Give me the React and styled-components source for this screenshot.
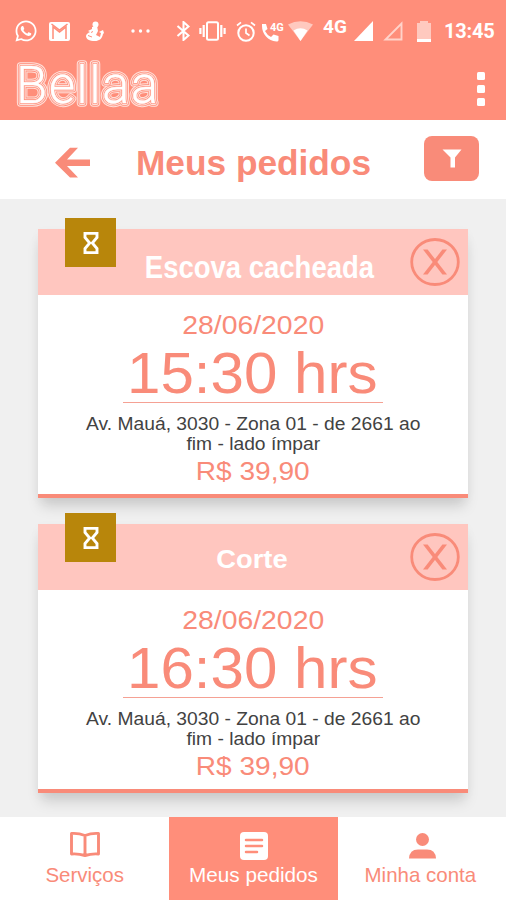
import React from "react";
import styled, { createGlobalStyle } from "styled-components";
import { FaWhatsapp } from "react-icons/fa";

const CORAL = "#ff8e7a";
const INK = "#f98b79";

const Global = createGlobalStyle`
  * { box-sizing: border-box; }
  body { margin: 0; background: #f0f0f0; font-family: "Liberation Sans", Arial, sans-serif; }
  svg { display: block; flex: none; }
`;
const Screen = styled.div`
  width: 506px; height: 900px; display: flex; flex-direction: column; background: #f0f0f0; overflow: hidden;
`;
const TopBar = styled.header`
  flex: none; height: 120px; background: ${CORAL}; color: #fff;
`;
const StatusBar = styled.div`
  height: 60px; padding: 19px 0 0 14px; display: flex; align-items: flex-start;
`;
const Slot = styled.span`
  flex: none; display: flex; width: ${(p) => p.$w}px; height: 24px; align-items: center;
`;
const Network = styled.span`
  width: 31px; margin-top: -2px; font: 700 19px/19px Roboto, sans-serif;
`;
const Clock = styled.span`
  font: 700 20px/25px Roboto, sans-serif; letter-spacing: -0.2px;
`;
const BrandRow = styled.div`
  height: 59px; padding: 0 19px 0 17px; display: flex; justify-content: space-between;
`;
const Logo = styled.svg`
  font: 300 51px Roboto, "Liberation Sans", sans-serif; overflow: visible;
  text { stroke-linejoin: round; }
`;
const Menu = styled.div`
  display: flex; flex-direction: column; gap: 5px; padding: 12px 2px 0 0;
`;
const MenuDot = styled.i`
  width: 8px; height: 8px; border-radius: 1.5px; background: #fff;
`;
const TitleBar = styled.div`
  flex: none; height: 79px; background: #fff; display: grid; grid-template-columns: 136px 1fr 82px; color: ${INK};
`;
const BackButton = styled.button`
  border: 0; background: none; padding: 26.5px 0 0 55px; display: flex; align-items: flex-start; color: inherit;
`;
const Text = styled.div`
  white-space: pre-line; transform: scaleX(${(p) => p.$sx || 1}); transform-origin: ${(p) => p.$origin || "center"};
`;
const Title = styled(Text)`
  font-size: 35px; font-weight: 700; line-height: 40px; padding-top: 22.5px; margin-left: -0.5px; white-space: nowrap;
`;
const FilterButton = styled.button`
  width: 55px; height: 45px; margin-top: 16px; padding: 0; border: 0; border-radius: 8px; background: ${INK};
  display: grid; place-items: center;
`;
const List = styled.main`
  flex: 1; padding: 30px 38px 0 37.5px; display: flex; flex-direction: column; gap: 26px;
`;
const Card = styled.article`
  flex: none; height: 269px; background: #fff; border-bottom: 4px solid ${INK};
  box-shadow: 0 11px 13px -3px rgba(0, 0, 0, 0.15), 0 3px 10px rgba(0, 0, 0, 0.03);
`;
const CardHead = styled.div`
  position: relative; height: 66px; background: #ffc6bf; display: flex; justify-content: center; color: #fff;
`;
const Badge = styled.span`
  position: absolute; left: 27.9px; top: -11px; width: 50.5px; height: 49px; background: #b8860b; display: grid; place-items: center;
`;
const Service = styled(Text)`
  font-size: ${(p) => p.$size}px; line-height: 36px; font-weight: 700; margin-top: ${(p) => p.$top}px; margin-left: ${(p) => p.$dx}px; white-space: nowrap;
`;
const Cancel = styled.button`
  position: absolute; right: 8.5px; top: 8px; border: 0; padding: 0; background: none;
`;
const CardBody = styled.div`
  padding-top: 15px; text-align: center; color: ${INK};
`;
const DateText = styled(Text)`font-size: 26px; line-height: 30px;`;
const Time = styled(Text)`font-size: 57.5px; line-height: 64px; padding-top: 1px; margin-left: -2px;`;
const Rule = styled.div`width: 260px; height: 1px; margin: -3px auto 0; background: #f5a194;`;
const Address = styled(Text)`font-size: 17.5px; line-height: 20px; padding-top: 11px; color: #424242;`;
const Price = styled(Text)`font-size: 26px; line-height: 30px; padding-top: 2px; margin-left: -1px;`;
const Nav = styled.nav`
  flex: none; height: 83px; background: #fff; display: grid; grid-template-columns: 169px 169px 1fr;
`;
const Tab = styled.a`
  display: flex; flex-direction: column; align-items: center; padding-top: 13px; gap: 2px;
  background: ${(p) => (p.$active ? CORAL : "#fff")}; color: ${(p) => (p.$active ? "#fff" : INK)};
`;
const TabLabel = styled(Text)`
  font-size: 20.7px; line-height: 24px; white-space: nowrap; margin-left: ${(p) => p.$dx || 0}px;
`;

const services = [
  { name: "Escova cacheada", size: 32, sx: 0.859, top: 20, dx: 14, time: "15:30 hrs" },
  { name: "Corte", size: 26, sx: 1.05, top: 17, dx: -1, time: "16:30 hrs" },
];

const Bellaa = () => (
  <Logo width="144" height="50" viewBox="0 0 144 50">
    {[[7.4, "#ffe0da"], [5.4, CORAL], [3.8, "#ffe0da"], [1.9, CORAL]].map(([w, c]) => (
      <text key={w} x="-1" y="42.5" textLength="142" stroke={c} strokeWidth={w} fill={c}>Bellaa</text>
    ))}
    <text x="-1" y="42.5" textLength="142" fill="#fff" stroke="#fff" strokeWidth="0.4">Bellaa</text>
  </Logo>
);

function Order({ order }) {
  return (
    <Card>
      <CardHead>
        <Badge>
          <svg width="18" height="24" viewBox="0 0 18 24" fill="none" stroke="#fff" strokeWidth="2.9">
            <path d="M3 2.4h12v4.1L10.300 12l4.700 5.500v4.100H3v-4.100L7.700 12 3 6.500z" />
          </svg>
        </Badge>
        <Service $size={order.size} $sx={order.sx} $top={order.top} $dx={order.dx}>{order.name}</Service>
        <Cancel aria-label="Cancelar">
          <svg width="50" height="50" viewBox="0 0 50 50" fill="none" stroke={INK}>
            <ellipse cx="25" cy="25" rx="23.3" ry="22.5" strokeWidth="2.8" />
            <path d="M13 12.500h4.600L37 37.500h-4.600z" stroke="none" fill={INK} />
            <path d="M37 12.500h-4.600L13 37.500h4.600z" stroke="none" fill={INK} />
          </svg>
        </Cancel>
      </CardHead>
      <CardBody>
        <DateText $sx={1.09}>28/06/2020</DateText>
        <Time $sx={1.045}>{order.time}</Time>
        <Rule />
        <Address $sx={1.1}>{"Av. Mauá, 3030 - Zona 01 - de 2661 ao\nfim - lado ímpar"}</Address>
        <Price $sx={1.08}>R$ 39,90</Price>
      </CardBody>
    </Card>
  );
}

export default function App() {
  return (
    <Screen>
      <Global />
      <TopBar>
        <StatusBar>
          <Slot $w={35}><FaWhatsapp size={24} /></Slot>
          <Slot $w={36}>
            <svg width="21" height="19" viewBox="0 0 21 19"><rect width="21" height="19" rx="2" fill="#fff" /><path d="M4 17V5l6.5 5L17 5v12M2.500 2l8 6 8-6" fill="none" stroke={CORAL} strokeWidth="1.5" /></svg>
          </Slot>
          <Slot $w={46}>
            <svg width="19" height="21" viewBox="0 0 19 21" fill="#fff"><circle cx="10.5" cy="3.4" r="3" /><path d="M7 6l5-1 1 5-2 4 4 2 1-4-2-1 4-2 1 3-1 1c-1 5-4 7-8 7-6 0-9-2-9-5 0-2 2-3 4-4l-2-1 4-2z" /><path d="M3 14.5l4 1.500M7.500 10l-1 2" stroke={CORAL} /></svg>
          </Slot>
          <Slot $w={45}><svg width="19" height="4" viewBox="0 0 19 4" fill="#fff"><circle cx="2" cy="2" r="1.7" /><circle cx="9.5" cy="2" r="1.7" /><circle cx="17" cy="2" r="1.7" /></svg></Slot>
          <Slot $w={23}><svg width="15" height="20" viewBox="0 0 15 20" fill="none" stroke="#fff" strokeWidth="2"><path d="M1.5 5l11 9.500L7.500 19V1l5 4.500-11 9.500" /></svg></Slot>
          <Slot $w={37}>
            <svg width="27" height="20" viewBox="0 0 27 20" fill="none" stroke="#fff" strokeWidth="2"><rect x="8" y="1.2" width="11" height="17.6" rx="1.5" /><path d="M4.700 4v12M1.400 7v6M22.300 4v12M25.600 7v6" strokeWidth="2.2" /></svg>
          </Slot>
          <Slot $w={26}>
            <svg width="20" height="21" viewBox="0 0 20 21" fill="none" stroke="#fff" strokeWidth="2"><circle cx="10" cy="12" r="7.7" /><path d="M10 7.500V12l3.500 2.500M1 4.500l4-3.200M19 4.500l-4-3.200" strokeWidth="1.7" /></svg>
          </Slot>
          <Slot $w={26}>
            <svg width="22" height="21" viewBox="0 0 22 21" fill="#fff"><path d="M0 3h4l1.500 5-2.500 2q2 4 6 6l2.500-2.500 5 1.500v4c0 1-1 1.500-2 1.500C6 20 0 13 0 5z" /><text x="8" y="10" fontFamily="Roboto, sans-serif" fontWeight="700" fontSize="11">4G</text></svg>
          </Slot>
          <Slot $w={35}>
            <svg width="25" height="20" viewBox="0 0 25 20"><path d="M0 3.500Q12.500-3 25 3.500L12.500 20z" fill="#ffc9bf" /><path d="M5.500 9.500Q12.500 5 19.500 9.500L12.500 20z" fill="#fff" /></svg>
          </Slot>
          <Network>4G</Network>
          <Slot $w={29}><svg width="19" height="20" viewBox="0 0 19 20"><path d="M19 0v20H0z" fill="#fff" /></svg></Slot>
          <Slot $w={34}><svg width="20" height="20" viewBox="0 0 20 20"><path d="M18.500 2.500v16H2.500z" fill="none" stroke="#ffd3ca" strokeWidth="1.900" /></svg></Slot>
          <Slot $w={27}><svg width="14" height="21" viewBox="0 0 14 21"><path d="M0 2h3V0h8v2h3v19H0z" fill="#ffc9bf" /><path d="M0 18h14v3H0z" fill="#fff" /></svg></Slot>
          <Clock>13:45</Clock>
        </StatusBar>
        <BrandRow>
          <Bellaa />
          <Menu><MenuDot /><MenuDot /><MenuDot /></Menu>
        </BrandRow>
      </TopBar>
      <TitleBar>
        <BackButton aria-label="Voltar">
          <svg width="36" height="32" viewBox="0 0 36 32" fill={INK}><path d="M0 15.800L15 .7h8L12 12.500H35v6.600H12L23 30.500h-8z" /></svg>
        </BackButton>
        <Title $sx={1.007} $origin="left">Meus pedidos</Title>
        <FilterButton aria-label="Filtrar">
          <svg width="20" height="19" viewBox="0 0 20 19"><path d="M.5.500h19l-6.500 8v10H8.500v-10z" fill="#fff" /></svg>
        </FilterButton>
      </TitleBar>
      <List>{services.map((s) => <Order key={s.name} order={s} />)}</List>
      <Nav>
        <Tab>
          <svg width="30" height="31" viewBox="0 0 30 31" fill="none" stroke={INK} strokeWidth="2.900" strokeLinejoin="round"><path d="M1.500 3.500q7-.5 13.500 2 6.500-2.500 13.500-2v20.500q-7-.5-13.500 1.500-6.500-2-13.500-1.500zM15 5.500v20" /></svg>
          <TabLabel $sx={0.99}>Serviços</TabLabel>
        </Tab>
        <Tab $active>
          <svg width="28" height="31" viewBox="0 0 28 31"><rect y="2" width="28" height="28" rx="4" fill="#fff" /><path d="M6 10h16M6 16h16M6 22h11" stroke={CORAL} strokeWidth="2.500" strokeLinecap="round" /></svg>
          <TabLabel>Meus pedidos</TabLabel>
        </Tab>
        <Tab>
          <svg width="27" height="31" viewBox="0 0 27 31" fill={INK}><circle cx="13.500" cy="9.500" r="6.500" /><path d="M0 28.500q.5-9 9-9h9q8.500 0 9 9z" /></svg>
          <TabLabel $sx={0.99} $dx={-3}>Minha conta</TabLabel>
        </Tab>
      </Nav>
    </Screen>
  );
}
